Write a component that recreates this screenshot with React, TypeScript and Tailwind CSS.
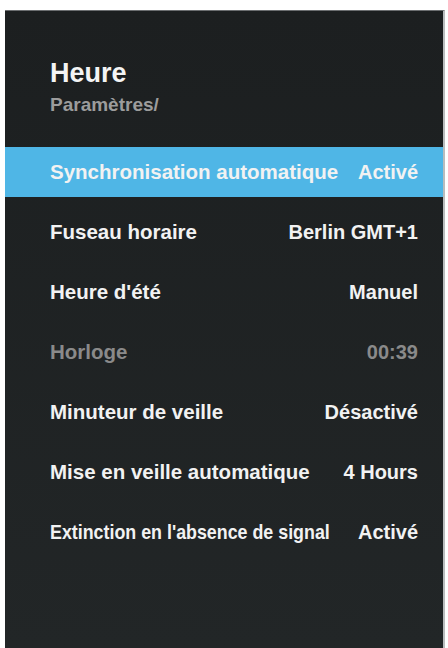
const rows: { label: string; value: string; active?: boolean; dim?: boolean; narrow?: boolean }[] = [
  { label: 'Synchronisation automatique', value: 'Activé', active: true },
  { label: 'Fuseau horaire', value: 'Berlin GMT+1' },
  { label: "Heure d'été", value: 'Manuel' },
  { label: 'Horloge', value: '00:39', dim: true },
  { label: 'Minuteur de veille', value: 'Désactivé' },
  { label: 'Mise en veille automatique', value: '4 Hours' },
  { label: "Extinction en l'absence de signal", value: 'Activé', narrow: true },
]

export default function App() {
  return (
    <div
      className="h-[648px] w-[448px] overflow-hidden bg-white pt-[10px] pl-[5px] pr-[3px]"
      style={{ fontFamily: '"Liberation Sans", Arial, sans-serif' }}
    >
      <div className="flex h-full flex-col border-t border-r-[2px] border-t-[#6b6e70] border-r-[#b9bcbd] bg-[#1f2223] bg-gradient-to-b from-[#1c1f20] to-[#222627]">
        <div className="flex flex-col pl-[45px] pt-[46px]">
          <div className="text-[27px] leading-[32px] font-bold text-[#f4f4f4]">Heure</div>
          <div className="mt-[4px] text-[19px] leading-[24px] font-bold text-[#9c9c9c]">Paramètres/</div>
        </div>
        <div className="mt-[25px] flex flex-col">
          {rows.map((row) => (
            <div key={row.label} className="flex h-[60px] items-center">
              <div
                className={
                  row.active
                    ? 'flex h-[50px] w-full items-center justify-between bg-[#4fb6e6] pl-[45px] pr-[25px]'
                    : 'flex h-[50px] w-full items-center justify-between pl-[45px] pr-[25px]'
                }
              >
                {row.narrow ? (
                  <div className="w-[282px]">
                    <span className="inline-block origin-left scale-x-[0.87] whitespace-nowrap text-[20.5px] font-bold text-[#f2f2f2]">
                      {row.label}
                    </span>
                  </div>
                ) : (
                  <span
                    className={
                      row.dim
                        ? 'whitespace-nowrap text-[20.5px] font-bold text-[#8a8a8a]'
                        : 'whitespace-nowrap text-[20.5px] font-bold text-[#f2f2f2]'
                    }
                  >
                    {row.label}
                  </span>
                )}
                <span
                  className={
                    row.dim
                      ? 'whitespace-nowrap text-[20px] font-bold text-[#8a8a8a]'
                      : 'whitespace-nowrap text-[20px] font-bold text-[#f2f2f2]'
                  }
                >
                  {row.value}
                </span>
              </div>
            </div>
          ))}
        </div>
      </div>
    </div>
  )
}
